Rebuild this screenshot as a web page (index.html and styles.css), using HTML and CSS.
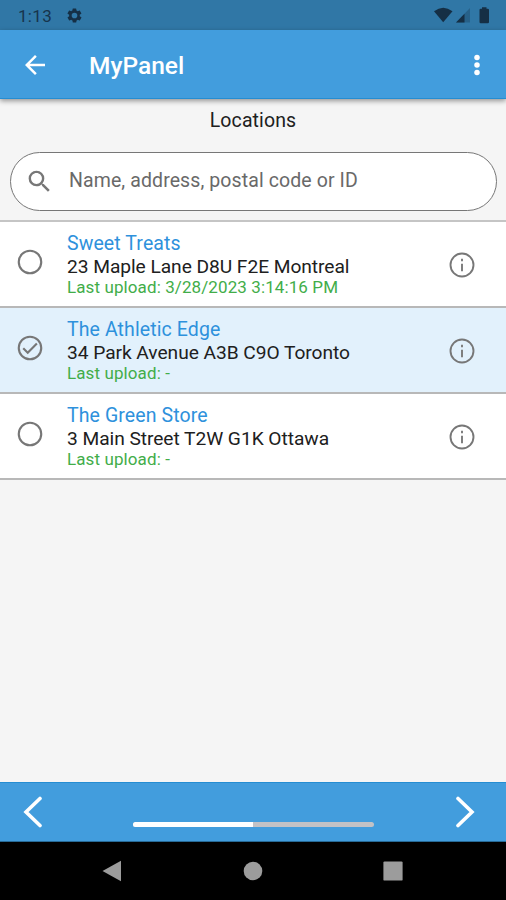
FILE: index.html
```html
<!DOCTYPE html>
<html lang="en">
<head>
<meta charset="utf-8">
<title>MyPanel</title>
<link rel="stylesheet" href="styles.css">
</head>
<body>
<div class="screen">
  <div class="status">
    <span class="clock">1:13</span>
    <svg class="gear" viewBox="0 0 24 24"><path fill-rule="evenodd" d="M19.4 13a7.500 7.500 0 0 0 0-2l2.100-1.600a.5.5 0 0 0 .1-.7l-2-3.400a.5.5 0 0 0-.6-.2l-2.500 1a7.300 7.300 0 0 0-1.700-1l-.4-2.600a.5.5 0 0 0-.5-.5h-4a.5.5 0 0 0-.5.5L9 5.100a7.300 7.300 0 0 0-1.700 1l-2.500-1a.5.5 0 0 0-.6.2l-2 3.400a.5.5 0 0 0 .1.7L4.500 11a7.500 7.500 0 0 0 0 2l-2.100 1.600a.5.5 0 0 0-.1.7l2 3.400a.5.5 0 0 0 .6.2l2.500-1a7.300 7.300 0 0 0 1.700 1l.4 2.600a.5.5 0 0 0 .5.500h4a.5.5 0 0 0 .5-.5l.4-2.600a7.300 7.300 0 0 0 1.700-1l2.500 1a.5.5 0 0 0 .6-.2l2-3.400a.5.5 0 0 0-.1-.7zM12 16a4 4 0 1 1 0-8 4 4 0 0 1 0 8z"/></svg>
    <svg class="signals" viewBox="0 0 56 17"><path d="M0 4.200Q9.200-2.800 18.500 4.200L9.200 15.200z"/><path d="M36 1v14.500H22z" opacity=".3"/><path d="M30.500 6.700v8.800H22z"/><path d="M45.500 3q0-1.200 1.200-1.200h1.300V.3h4.500v1.500h1.300q1.200 0 1.200 1.200v12q0 1.200-1.200 1.200h-7.100q-1.200 0-1.200-1.200z"/></svg>
  </div>
  <header class="appbar">
    <svg class="icon" viewBox="0 0 24 24"><path d="M20 11H7.830l5.590-5.590L12 4l-8 8 8 8 1.410-1.410L7.830 13H20z"/></svg>
    <h1>MyPanel</h1>
    <svg class="icon" viewBox="0 0 24 24"><circle cx="12" cy="6" r="2.200"/><circle cx="12" cy="12" r="2.200"/><circle cx="12" cy="18" r="2.200"/></svg>
  </header>
  <main>
    <h2>Locations</h2>
    <div class="search">
      <svg viewBox="0 0 24 24"><path d="M15.500 14h-.79l-.28-.27A6.471 6.471 0 0 0 16 9.500 6.500 6.500 0 1 0 9.500 16c1.610 0 3.090-.59 4.230-1.570l.27.28v.79l5 4.990L20.490 19zm-6 0C7.010 14 5 11.990 5 9.500S7.010 5 9.500 5 14 7.010 14 9.500 11.990 14 9.500 14z"/></svg>
      <span>Name, address, postal code or ID</span>
    </div>
    <ul class="list">
      <li>
        <svg class="mark" viewBox="0 0 24 24"><circle cx="12" cy="12" r="9"/></svg>
        <div class="text"><a>Sweet Treats</a><p>23 Maple Lane D8U F2E Montreal</p><small>Last upload: 3/28/2023 3:14:16 PM</small></div>
        <svg class="info" viewBox="0 0 24 24"><circle cx="12" cy="12" r="9.200"/><path d="M12 11v6M12 7v2"/></svg>
      </li>
      <li class="selected">
        <svg class="mark" viewBox="0 0 24 24"><circle cx="12" cy="12" r="9"/><path d="M6.600 12.200l3.600 3.600 7.300-7.400"/></svg>
        <div class="text"><a>The Athletic Edge</a><p>34 Park Avenue A3B C9O Toronto</p><small>Last upload: -</small></div>
        <svg class="info" viewBox="0 0 24 24"><circle cx="12" cy="12" r="9.200"/><path d="M12 11v6M12 7v2"/></svg>
      </li>
      <li>
        <svg class="mark" viewBox="0 0 24 24"><circle cx="12" cy="12" r="9"/></svg>
        <div class="text"><a>The Green Store</a><p>3 Main Street T2W G1K Ottawa</p><small>Last upload: -</small></div>
        <svg class="info" viewBox="0 0 24 24"><circle cx="12" cy="12" r="9.200"/><path d="M12 11v6M12 7v2"/></svg>
      </li>
    </ul>
  </main>
  <footer class="pager">
    <svg viewBox="0 0 20 32"><path d="M17 2.500L3 16l14 13.500"/></svg>
    <div class="progress"><div></div></div>
    <svg viewBox="0 0 20 32"><path d="M3 2.500L17 16 3 29.500"/></svg>
  </footer>
  <nav class="system">
    <svg viewBox="0 0 20 22"><path d="M.5 11L19 .8v20.400z"/></svg>
    <svg viewBox="0 0 20 22"><circle cx="10" cy="11" r="9.300"/></svg>
    <svg viewBox="0 0 20 22"><rect x=".4" y="1.400" width="19.200" height="19.200" rx="1.200"/></svg>
  </nav>
</div>
</body>
</html>
```

FILE: styles.css
```css
* { box-sizing: border-box; }
body, h1, h2, p, ul { margin: 0; padding: 0; }
body { font-family: Roboto, "Liberation Sans", sans-serif; background: #f5f5f5; color: #202020; }
svg { display: block; flex: none; }
.screen { width: 506px; height: 900px; display: flex; flex-direction: column; overflow: hidden; white-space: nowrap; }
.status { height: 30px; background: #3077a6; display: flex; align-items: center; padding: 1px 16px 0 18px; color: #17344c; fill: #152f45; }
.clock { font-size: 17px; letter-spacing: .3px; width: 48px; }
.gear { width: 17px; height: 17px; }
.signals { width: 56px; height: 17px; margin-left: auto; }
.appbar { height: 69px; background: #429ddd; border-bottom: 1px solid #258dd2; display: flex; align-items: center; padding: 1px 14px 0 20px; fill: #fff; color: #fff; position: relative; box-shadow: 0 2px 5px rgba(0,0,0,.4); }
.icon { width: 30px; height: 30px; }
h1 { font-size: 24.5px; font-weight: 500; margin: 3px auto 0 39px; line-height: 30px; }
main { flex: 1; background: #f5f5f5; }
h2 { font-size: 19.5px; font-weight: 400; line-height: 24px; text-align: center; padding-top: 10px; letter-spacing: .12px; }
.search { margin: 19px 9px 9px 10px; height: 59px; border: 1px solid #777; border-radius: 30px; background: #fff; display: flex; align-items: center; padding: 0 14px; color: #696969; font-size: 19.5px; letter-spacing: .1px; }
.search svg { width: 29px; height: 29px; fill: #777; margin-right: 15px; }
.search span { margin-top: -3px; }
.list { list-style: none; border-top: 2px solid #c5c5c5; }
li { height: 86px; display: flex; align-items: center; border-bottom: 2px solid #b8b8b8; background: #fff; padding: 0 29px 0 15px; }
.selected { background: #e2f1fc; }
.mark, .info { width: 30px; height: 30px; fill: none; stroke: #777; stroke-width: 1.700; }
.mark { margin-top: -5px; }
.info { stroke-width: 1.500; margin-top: 1px; }
.text { margin: 2px auto 0 22px; }
a { display: block; color: #2e91dc; font-size: 19.5px; line-height: 23px; letter-spacing: .1px; }
p { font-size: 19.2px; line-height: 22px; letter-spacing: -.05px; position: relative; top: 1px; }
small { display: block; font-size: 17px; line-height: 21px; color: #42ad49; letter-spacing: .1px; }
.pager { height: 60px; background: #429ddd; border-top: 1px solid #258dd2; border-bottom: 1px solid #276b98; display: flex; align-items: center; justify-content: space-between; padding: 1px 31px 1px 23px; }
.pager svg { width: 20px; height: 32px; fill: none; stroke: #fff; stroke-width: 3.600; stroke-linecap: round; }
.progress { width: 241px; height: 5px; margin: 24px 0 0 8px; background: #c2c2c6; border-radius: 3px; overflow: hidden; }
.progress div { width: 50%; height: 100%; background: #fff; }
.system { height: 58px; background: #000; display: flex; align-items: center; justify-content: space-between; padding: 0 103px 0 102px; fill: #9c9c9c; }
.system svg { width: 20px; height: 22px; }
```
